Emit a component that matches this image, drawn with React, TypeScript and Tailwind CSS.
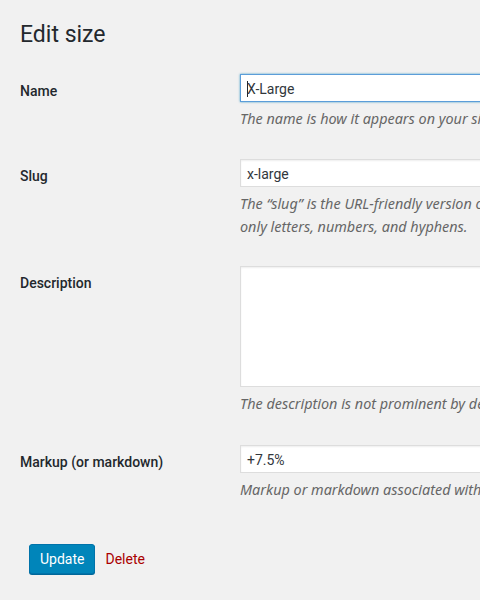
const font = { fontFamily: 'Roboto, "Noto Sans", sans-serif' };
const italicFont = { fontFamily: '"Noto Sans", "Open Sans", sans-serif' };

function Row({
  label,
  children,
  className,
}: {
  label: string;
  children: React.ReactNode;
  className?: string;
}) {
  return (
    <div className={"grid grid-cols-[220px_1fr] " + (className ?? "")}>
      <div className="pt-[7px] text-[14px] leading-[20px] font-medium text-[#23282d]">{label}</div>
      <div className="min-w-0">{children}</div>
    </div>
  );
}

function Desc({ children }: { children: React.ReactNode }) {
  return (
    <p className="mt-[5px] whitespace-nowrap text-[14.4px] leading-[23px] italic text-[#666]" style={italicFont}>
      {children}
    </p>
  );
}

function Field({ value, focused }: { value: string; focused?: boolean }) {
  return (
    <div
      className={
        "flex h-[28px] w-[300px] items-center border bg-white px-[6px] pt-[2px] text-[14px] text-[#32373c] " +
        (focused
          ? "border-[#5b9dd9] shadow-[0_0_2px_rgba(30,140,190,0.8)]"
          : "border-[#ddd] shadow-[inset_0_1px_2px_rgba(0,0,0,0.07)]")
      }
    >
      {focused && <span className="mr-[-1px] inline-block h-[16px] w-px bg-[#23282d]" />}
      <span>{value}</span>
    </div>
  );
}

export default function App() {
  return (
    <div className="min-h-[600px] w-[480px] overflow-hidden bg-[#f1f1f1] pl-[20px]" style={font}>
      <h1 className="pt-[20px] text-[23px] leading-[29px] font-normal text-[#23282d]">Edit size</h1>

      <div className="mt-[25px] flex flex-col">
        <Row label="Name">
          <Field value="X-Large" focused />
          <Desc>The name is how it appears on your site.</Desc>
        </Row>

        <Row label="Slug" className="mt-[29px]">
          <Field value="x-large" />
          <Desc>
            The “slug” is the URL-friendly version of the name. It is usually all lowercase and contains
            <br />
            only letters, numbers, and hyphens.
          </Desc>
        </Row>

        <Row label="Description" className="mt-[28px]">
          <div className="h-[121px] w-[300px] border border-[#ddd] bg-white shadow-[inset_0_1px_2px_rgba(0,0,0,0.07)]" />
          <Desc>The description is not prominent by default; however, some themes may show it.</Desc>
        </Row>

        <Row label="Markup (or markdown)" className="mt-[30px]">
          <Field value="+7.5%" />
          <Desc>Markup or markdown associated with this size.</Desc>
        </Row>
      </div>

      <div className="mt-[43px] flex items-center gap-[10px] pl-[9px]">
        <button className="h-[30px] rounded-[3px] border border-[#0073aa] bg-[#0085ba] px-[10px] text-[14px] text-white shadow-[0_1px_0_#006799]">
          Update
        </button>
        <a className="text-[14px] text-[#a00]">Delete</a>
      </div>
    </div>
  );
}
